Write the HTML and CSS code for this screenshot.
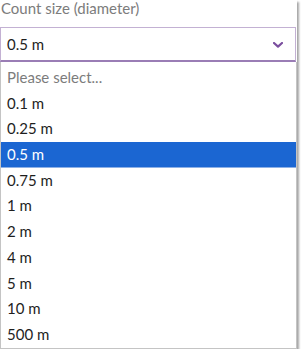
FILE: index.html
```html
<!DOCTYPE html>
<html lang="en">

<head>
    <meta charset="UTF-8">
    <meta name="viewport" content="width=device-width, initial-scale=1.0">
    <title>Count size</title>
    <link rel="stylesheet" href="styles.css">
</head>

<body>
    <div class="field">
        <label class="field-label">Count size (diameter)</label>
        <div class="select">
            <span class="select-value">0.5 m</span>
            <svg class="chevron" width="10" height="6" viewBox="0 0 10 6">
                <path d="M1 1 L5 4.6 L9 1" fill="none" stroke="#7b4f9f" stroke-width="2.2" stroke-linecap="round" stroke-linejoin="round" />
            </svg>
        </div>
        <ul class="options">
            <li class="option placeholder">Please select...</li>
            <li class="option">0.1 m</li>
            <li class="option">0.25 m</li>
            <li class="option selected">0.5 m</li>
            <li class="option">0.75 m</li>
            <li class="option">1 m</li>
            <li class="option">2 m</li>
            <li class="option">4 m</li>
            <li class="option">5 m</li>
            <li class="option">10 m</li>
            <li class="option">500 m</li>
        </ul>
    </div>
</body>

</html>
```

FILE: styles.css
```css
* {
    margin: 0;
    padding: 0;
    box-sizing: border-box;
}

body {
    background: #fff;
    font-family: Lato, "Open Sans", sans-serif;
    font-size: 15px;
    color: #1e1e1e;
}

.field {
    width: 297px;
    background: #fff;
    box-shadow: 2px 2px 2px rgba(0, 0, 0, .35);
}

.field-label {
    display: block;
    height: 27px;
    padding: 0 0 0 1px;
    line-height: 16px;
    color: #7c7c7c;
}

.select {
    display: flex;
    align-items: center;
    justify-content: space-between;
    width: 296px;
    height: 35px;
    padding: 0 12px 0 6px;
    border: 1px solid #c3b1d3;
    border-bottom: 2px solid #9a7db5;
}

.select-value {
    line-height: 20px;
    padding-bottom: 1px;
}

.chevron {
    display: block;
    margin-top: 1px;
}

.options {
    list-style: none;
    width: 297px;
    padding-top: 3px;
    border: 1px solid #c4c4c4;
    border-top: none;
}

.option {
    height: 25.7px;
    line-height: 25.7px;
    padding-left: 6px;
}

.placeholder {
    color: #7c7c7c;
}

.selected {
    background: #1b66d2;
    color: #fff;
    border-bottom: 1px solid #8db0e6;
    line-height: 24.7px;
}
```
